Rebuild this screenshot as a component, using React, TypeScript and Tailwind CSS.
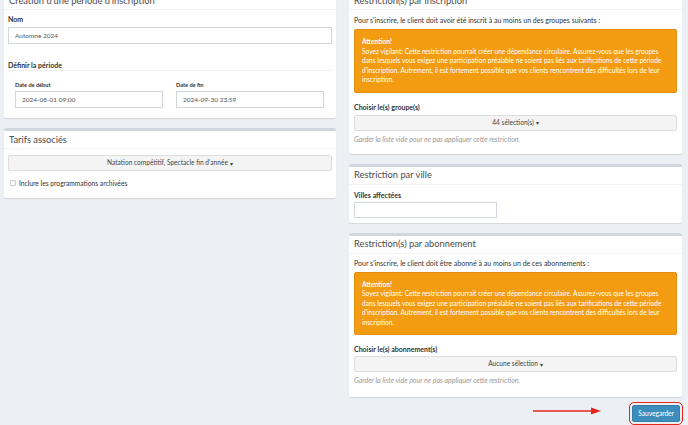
import React from "react";

const font = { fontFamily: "Lato, 'Open Sans', sans-serif" };

const Box: React.FC<{ title: string; children: React.ReactNode; className?: string }> = ({
  title,
  children,
  className = "",
}) => (
  <div className={`bg-white border-t-[3px] border-[#d2d6de] rounded-[2px] shadow-[0_1px_1px_rgba(0,0,0,0.1)] ${className}`}>
    <div className="h-[18px] flex items-center px-[5px] border-b border-[#f4f4f4] text-[9.3px] text-[#4a4a4a]">
      {title}
    </div>
    {children}
  </div>
);

const SelectButton: React.FC<{ label: string }> = ({ label }) => (
  <div className="h-[16px] flex items-center justify-center bg-[#f4f4f4] border border-[#ddd] rounded-[2px] text-[6.6px] text-[#444]">
    {label}
    <span className="ml-[2px] text-[6px]">▾</span>
  </div>
);

const WarningAlert = () => (
  <div className="bg-[#f39c12] border border-[#e08e0b] rounded-[2px] text-white text-[6.6px] leading-[9.5px] pt-[7px] pb-[7px] px-[7px]">
    <div className="font-bold">Attention!</div>
    <div className="whitespace-nowrap">
      Soyez vigilant: Cette restriction pourrait créer une dépendance circulaire. Assurez-vous que les groupes
    </div>
    <div className="whitespace-nowrap">
      dans lesquels vous exigez une participation préalable ne soient pas liés aux tarifications de cette période
    </div>
    <div className="whitespace-nowrap">
      d'inscription. Autrement, il est fortement possible que vos clients rencontrent des difficultés lors de leur
    </div>
    <div>inscription.</div>
  </div>
);

export default function App() {
  return (
    <div className="w-[688px] h-[425px] overflow-hidden bg-[#ecf0f5] text-[#333]" style={font}>
      <div className="-mt-[11px] pl-[4px] pr-[6px] flex gap-[13px] items-start">
        {/* left column */}
        <div className="w-[332px] flex flex-col gap-[10px]">
          <Box title="Création d'une période d'inscription" className="pb-[10px]">
            <div className="px-[4px] pt-[4px]">
              <div className="h-[10px] leading-[10px] text-[7px] font-bold">Nom</div>
              <div className="mt-[3px] h-[17px] border border-[#d2d6de] flex items-center px-[6px] text-[6.5px] text-[#555]">
                Automne 2024
              </div>
              <div className="mt-[16px] h-[11px] leading-[10px] text-[7px] font-bold border-b border-[#eee]">
                Définir la période
              </div>
              <div className="grid grid-cols-2 gap-[13px] pl-[7px] pr-[8px] mt-[9px]">
                <div>
                  <div className="h-[10px] leading-[10px] text-[5.6px] font-bold">Date de début</div>
                  <div className="mt-[1px] h-[17px] border border-[#d2d6de] flex items-center px-[6px] text-[6.5px] text-[#555]">
                    2024-08-01 09:00
                  </div>
                </div>
                <div>
                  <div className="h-[10px] leading-[10px] text-[5.6px] font-bold">Date de fin</div>
                  <div className="mt-[1px] h-[17px] border border-[#d2d6de] flex items-center px-[6px] text-[6.5px] text-[#555]">
                    2024-09-30 23:59
                  </div>
                </div>
              </div>
            </div>
          </Box>
          <Box title="Tarifs associés" className="pb-[10px]">
            <div className="px-[4px] pt-[6px]">
              <SelectButton label="Natation compétitif, Spectacle fin d'année" />
              <div className="mt-[7px] flex items-center gap-[3px] text-[6.7px] text-[#333] px-[2px]">
                <span className="w-[6px] h-[6px] border border-[#ccc] rounded-[1px] bg-white" />
                Inclure les programmations archivées
              </div>
            </div>
          </Box>
        </div>

        {/* right column */}
        <div className="w-[333px] flex flex-col">
          <Box title="Restriction(s) par inscription" className="pb-[10px]">
            <div className="px-[5px] pt-[5px]">
              <div className="h-[10px] leading-[10px] text-[7px]">
                Pour s'inscrire, le client doit avoir été inscrit à au moins un des groupes suivants :
              </div>
              <div className="mt-[4px]">
                <WarningAlert />
              </div>
              <div className="mt-[9px] h-[10px] leading-[10px] text-[7px] font-bold">Choisir le(s) groupe(s)</div>
              <div className="mt-[3px]">
                <SelectButton label="44 sélection(s)" />
              </div>
              <div className="mt-[3px] h-[10px] leading-[10px] text-[7px] italic text-[#999]">
                Garder la liste vide pour ne pas appliquer cette restriction.
              </div>
            </div>
          </Box>
          <Box title="Restriction par ville" className="mt-[10px] pb-[5px]">
            <div className="px-[5px] pt-[5px]">
              <div className="h-[10px] leading-[10px] text-[7px] font-bold">Villes affectées</div>
              <div className="mt-[2px] w-[143px] h-[16px] border border-[#d2d6de]" />
            </div>
          </Box>
          <Box title="Restriction(s) par abonnement" className="mt-[10px] pb-[12px]">
            <div className="px-[5px] pt-[4px]">
              <div className="h-[10px] leading-[10px] text-[7px]">
                Pour s'inscrire, le client doit être abonné à au moins un de ces abonnements :
              </div>
              <div className="mt-[4px]">
                <WarningAlert />
              </div>
              <div className="mt-[9px] h-[10px] leading-[10px] text-[7px] font-bold">Choisir le(s) abonnement(s)</div>
              <div className="mt-[2px]">
                <SelectButton label="Aucune sélection" />
              </div>
              <div className="mt-[3px] h-[10px] leading-[10px] text-[7px] italic text-[#999]">
                Garder la liste vide pour ne pas appliquer cette restriction.
              </div>
            </div>
          </Box>
          <div className="mt-[8px] flex justify-end pr-[2px] relative">
            <svg className="absolute left-[184px] top-[1px]" width="70" height="10" viewBox="0 0 70 10">
              <line x1="0" y1="5" x2="60" y2="5" stroke="#e3261c" strokeWidth="1.5" />
              <polygon points="58,1.5 68,5 58,8.5" fill="#e3261c" />
            </svg>
            <div className="relative">
              <div className="h-[17px] px-[5px] flex items-center bg-[#3c8dbc] border border-[#367fa9] rounded-[2px] text-white text-[6.6px]">
                Sauvegarder
              </div>
              <div className="absolute -inset-[3px] border-[1.5px] border-[#e3261c] rounded-[5px]" />
            </div>
          </div>
        </div>
      </div>
    </div>
  );
}
